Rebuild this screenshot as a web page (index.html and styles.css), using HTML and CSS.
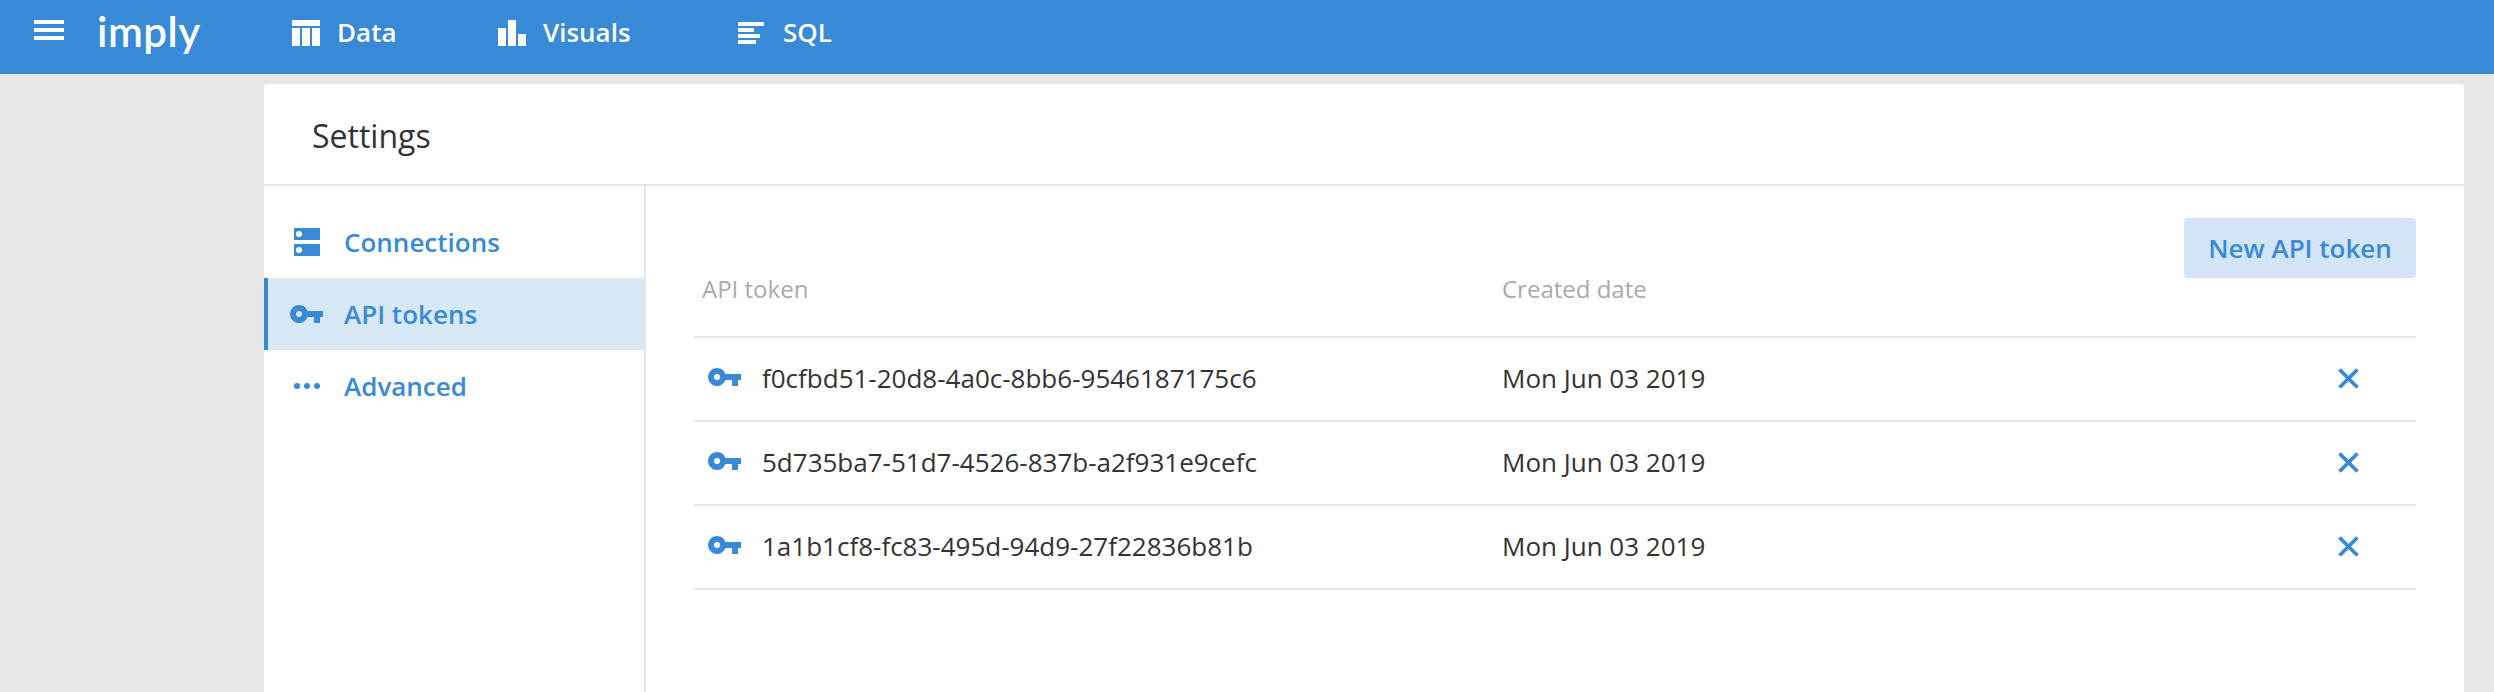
FILE: index.html
```html
<!DOCTYPE html>
<html lang="en">
<head>
<meta charset="utf-8">
<title>Settings</title>
<link rel="stylesheet" href="styles.css">
</head>
<body>
<svg class="sprite" width="0" height="0" aria-hidden="true">
  <symbol id="key" viewBox="0 0 33 18"><path fill-rule="evenodd" d="M9 0A9 9 0 0 1 17.5 6H33V12H30V18H24V12H17.5A9 9 0 1 1 9 0ZM9 6A3 3 0 1 0 9 12A3 3 0 0 0 9 6Z"/></symbol>
  <symbol id="cross" viewBox="0 0 21 21"><path d="M1.5 1.5L19.5 19.5M19.5 1.5L1.5 19.5" fill="none" stroke="currentColor" stroke-width="3.8"/></symbol>
</svg>
<header class="topbar">
  <svg class="menu" width="30" height="20" viewBox="0 0 30 20"><path d="M0 0H30V4H0ZM0 8H30V12H0ZM0 16H30V20H0Z"/></svg>
  <span class="logo">imply</span>
  <nav class="nav">
    <a class="nav-item nav-data"><svg width="28" height="26" viewBox="0 0 28 26"><path d="M0 0H28V6H0ZM0 8H8V26H0ZM10 8H18V26H10ZM20 8H28V26H20Z"/></svg><span>Data</span></a>
    <a class="nav-item nav-visuals"><svg width="28" height="26" viewBox="0 0 28 26"><path d="M0 8H8V26H0ZM10 0H18V26H10ZM20 14H28V26H20Z"/></svg><span>Visuals</span></a>
    <a class="nav-item nav-sql"><svg width="28" height="26" viewBox="0 0 28 26"><path d="M0 2H26V6H0ZM0 8H16V12H0ZM0 14H22V18H0ZM0 20H18V24H0Z"/></svg><span>SQL</span></a>
  </nav>
</header>
<main class="card">
  <h1 class="title">Settings</h1>
  <div class="body">
    <nav class="side">
      <a class="side-item"><svg width="33" height="28" viewBox="-4 0 33 28"><path fill-rule="evenodd" d="M0 0H26V12H0ZM5 3A3 3 0 1 0 5 9A3 3 0 0 0 5 3ZM0 16H26V28H0ZM5 19A3 3 0 1 0 5 25A3 3 0 0 0 5 19Z"/></svg><span>Connections</span></a>
      <a class="side-item active"><svg width="33" height="18"><use href="#key"/></svg><span>API tokens</span></a>
      <a class="side-item"><svg width="33" height="6" viewBox="-4 0 33 6"><circle cx="3" cy="3" r="3"/><circle cx="13" cy="3" r="3"/><circle cx="23" cy="3" r="3"/></svg><span>Advanced</span></a>
    </nav>
    <section class="content">
      <button class="new-token">New API token</button>
      <div class="row head"><span>API token</span><span>Created date</span></div>
      <div class="row"><span class="token"><svg width="33" height="18"><use href="#key"/></svg><span>f0cfbd51-20d8-4a0c-8bb6-9546187175c6</span></span><span>Mon Jun 03 2019</span><svg class="cross" width="21" height="21"><use href="#cross"/></svg></div>
      <div class="row"><span class="token"><svg width="33" height="18"><use href="#key"/></svg><span>5d735ba7-51d7-4526-837b-a2f931e9cefc</span></span><span>Mon Jun 03 2019</span><svg class="cross" width="21" height="21"><use href="#cross"/></svg></div>
      <div class="row"><span class="token"><svg width="33" height="18"><use href="#key"/></svg><span>1a1b1cf8-fc83-495d-94d9-27f22836b81b</span></span><span>Mon Jun 03 2019</span><svg class="cross" width="21" height="21"><use href="#cross"/></svg></div>
    </section>
  </div>
</main>
</body>
</html>
```
FILE: styles.css
```css
* { box-sizing: border-box; }
body {
  margin: 0;
  height: 692px;
  overflow: hidden;
  display: flex;
  flex-direction: column;
  background: #e6e6e6;
  color: #333;
  font: 26px/36px "Open Sans", sans-serif;
}
svg { display: block; flex: none; fill: currentColor; }
.sprite { position: absolute; }

.topbar {
  flex: none;
  display: flex;
  align-items: flex-start;
  height: 74px;
  padding-left: 34px;
  background: #398ad6;
  color: #fff;
}
.menu { margin-top: 20px; }
.logo {
  width: 192px;
  margin-left: 33px;
  padding-top: 5px;
  font: 600 42px/52px Lato, sans-serif;
  letter-spacing: 0.5px;
}
.nav { display: flex; padding-top: 14px; margin-left: 3px; font-weight: 600; }
.nav-item { display: flex; align-items: flex-start; gap: 17px; }
.nav-item svg { margin-top: 6px; }
.nav-data { width: 206px; }
.nav-visuals { width: 240px; }

.card {
  flex: 1;
  display: flex;
  flex-direction: column;
  margin: 10px 30px 0 264px;
  background: #fff;
  border-radius: 3px 3px 0 0;
}
.title {
  margin: 0;
  height: 102px;
  padding: 30px 48px 0;
  border-bottom: 2px solid #e6e6e6;
  font-size: 32px;
  line-height: 44px;
  font-weight: 400;
}
.body { flex: 1; display: flex; }
.side {
  width: 382px;
  padding-top: 20px;
  border-right: 2px solid #e6e6e6;
  color: #398ad6;
  font-weight: 600;
}
.side-item {
  display: flex;
  align-items: center;
  gap: 21px;
  height: 72px;
  padding: 0 0 0 22px;
  border-left: 4px solid transparent;
}
.active { background: #d7e8f6; border-left-color: #398ad6; }
.content {
  flex: 1;
  display: flex;
  flex-direction: column;
  padding: 32px 48px 0;
}
.new-token {
  align-self: flex-end;
  width: 232px;
  height: 60px;
  padding: 0;
  border: 0;
  border-radius: 4px;
  background: #d4e5f7;
  color: #398ad6;
  font: 600 26px/60px "Open Sans", sans-serif;
}
.row {
  display: grid;
  grid-template-columns: 800px 1fr 21px;
  align-items: center;
  height: 84px;
  padding: 0 57px 2px 8px;
  border-bottom: 2px solid #e6e6e6;
}
.head {
  height: 60px;
  align-items: start;
  color: #aaa;
  font-size: 24px;
  line-height: 22px;
}
.token { display: flex; align-items: center; gap: 21px; padding-left: 6px; }
.token svg { margin-top: -2px; color: #398ad6; }
.cross { color: #398ad6; }
```
